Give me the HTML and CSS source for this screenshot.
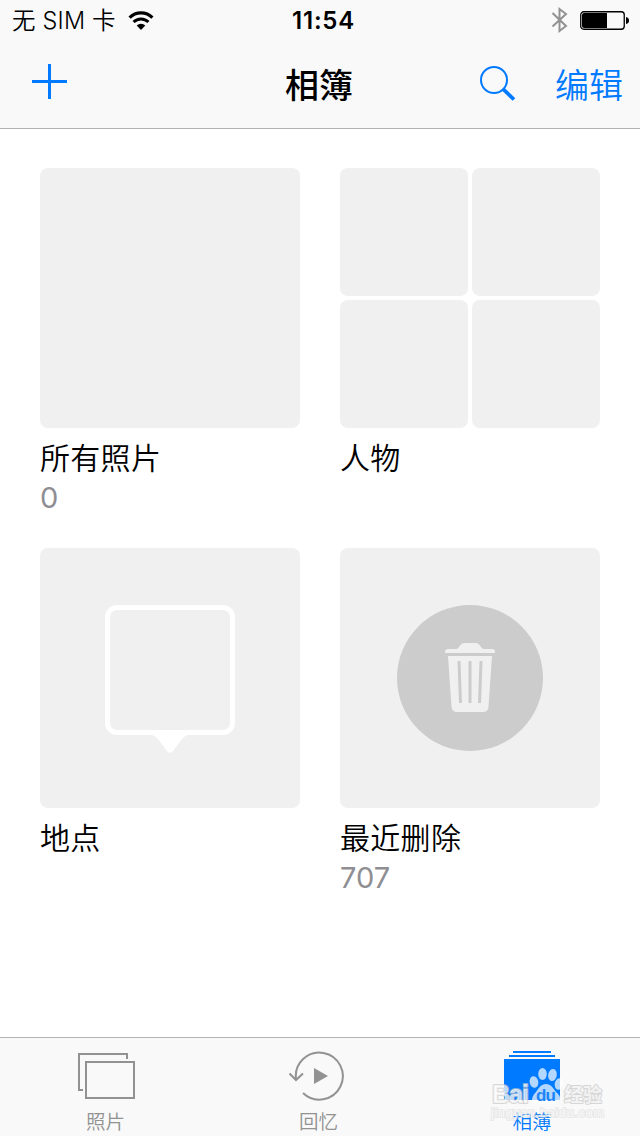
FILE: index.html
```
<!DOCTYPE html>
<html lang="zh-CN">
<head>
    <meta charset="UTF-8">
    <meta name="viewport" content="width=device-width, initial-scale=1.0">
    <title>相簿</title>
    <link rel="stylesheet" href="styles.css">
</head>
<body>
    <header class="top-section">
        <div class="status-bar">
            <div class="status-left">
                <span class="carrier">无 SIM 卡</span>
                <svg class="wifi" width="26" height="20" viewBox="0 0 26 20">
                    <path d="M1.6 6.6 A16 16 0 0 1 24.4 6.6" fill="none" stroke="#000" stroke-width="3.2"/>
                    <path d="M5.6 11 A10.4 10.4 0 0 1 20.4 11" fill="none" stroke="#000" stroke-width="3"/>
                    <path d="M8.7 14.6 A6 6 0 0 1 17.3 14.6 L13 19 Z" fill="#000"/>
                </svg>
            </div>
            <div class="clock">11:54</div>
            <div class="status-right">
                <svg width="18" height="28" viewBox="0 0 18 28">
                    <path d="M1.5 7 L15 20 L8.5 25 V3 L15 8 L1.5 20.500" fill="none" stroke="#929292" stroke-width="2"/>
                </svg>
                <svg class="battery" width="50" height="20" viewBox="0 0 50 20">
                    <rect x="0.75" y="0.75" width="43.5" height="17.500" rx="3" fill="none" stroke="#000" stroke-width="1.300"/>
                    <path d="M4 2 H27 V17 H4 Q2 17 2 15 V4 Q2 2 4 2 Z" fill="#000"/>
                    <path d="M46 6 Q49 6.500 49 9.500 Q49 12.500 46 13 Z" fill="#000"/>
                </svg>
            </div>
        </div>
        <nav class="nav-bar">
            <div class="nav-side">
                <svg class="plus" width="35" height="35" viewBox="0 0 35 35">
                    <path d="M16 0 H19 V16 H35 V19 H19 V35 H16 V19 H0 V16 H16 Z" fill="#007aff"/>
                </svg>
            </div>
            <h1 class="nav-title">相簿</h1>
            <div class="nav-side nav-right">
                <svg class="search" width="36" height="36" viewBox="0 0 36 36">
                    <circle cx="14" cy="14" r="13" fill="none" stroke="#007aff" stroke-width="2"/>
                    <path d="M23 23 L34 33.500" stroke="#007aff" stroke-width="3.800"/>
                </svg>
                <span class="edit">编辑</span>
            </div>
        </nav>
    </header>

    <main class="albums">
        <section class="album">
            <div class="cover"></div>
            <p class="album-name">所有照片</p>
            <p class="album-count">0</p>
        </section>
        <section class="album">
            <div class="cover-faces">
                <div class="face"></div>
                <div class="face"></div>
                <div class="face"></div>
                <div class="face"></div>
            </div>
            <p class="album-name">人物</p>
        </section>
        <section class="album">
            <div class="cover">
                <svg width="260" height="260" viewBox="0 0 260 260">
                    <rect x="67.500" y="59.500" width="125" height="125" rx="9.500" fill="none" stroke="#fff" stroke-width="5"/>
                    <path d="M108 186 C113 187 115 188 118 191 L125.500 201 Q130 208.500 134.500 201 L142 191 C145 188 147 187 152 186 Z" fill="#fff"/>
                </svg>
            </div>
            <p class="album-name">地点</p>
        </section>
        <section class="album">
            <div class="cover">
                <svg width="260" height="260" viewBox="0 0 260 260">
                    <circle cx="130" cy="130" r="73" fill="#ccc"/>
                    <path d="M105 105 V104 Q105 101 108 101 H116 Q118 101 119 99 L120.500 97 Q122 95 124.500 95 H135.500 Q138 95 139.500 97 L141 99 Q142 101 144 101 H152 Q155 101 155 104 V105 Z" fill="#f0f0f0"/>
                    <path d="M108 108 H152 L148.500 159 Q148 164 143 164 H117 Q112 164 111.500 159 Z" fill="#f0f0f0"/>
                    <path d="M119 113 L120.500 155 M130 113 V155 M141 113 L139.500 155" stroke="#ccc" stroke-width="3"/>
                </svg>
            </div>
            <p class="album-name">最近删除</p>
            <p class="album-count">707</p>
        </section>
    </main>

    <footer class="tab-bar">
        <div class="tab">
            <svg width="58" height="50" viewBox="0 0 58 50">
                <path d="M6 39 H2 V3 H50 V8" fill="none" stroke="#929292" stroke-width="2"/>
                <rect x="9" y="11" width="48" height="36" fill="none" stroke="#929292" stroke-width="2"/>
            </svg>
            <span>照片</span>
        </div>
        <div class="tab">
            <svg width="60" height="50" viewBox="0 0 60 50">
                <path d="M7 28 A23.500 23.500 0 1 1 14 42" fill="none" stroke="#929292" stroke-width="2"/>
                <path d="M0.500 22.500 L7 29 L14 22.500" fill="none" stroke="#929292" stroke-width="2"/>
                <path d="M25 17 L39 25 L25 33 Z" fill="#929292"/>
            </svg>
            <span>回忆</span>
        </div>
        <div class="tab tab-active">
            <svg width="56" height="50" viewBox="0 0 56 50">
                <path d="M9 0 H47 V2 H9 Z M5 4 H51 V6 H5 Z M0 8 H56 V49 H0 Z" fill="#007aff"/>
            </svg>
            <span>相簿</span>
        </div>
        <!-- 水印 -->
        <svg class="watermark" width="130" height="80" viewBox="0 0 130 80">
            <g class="mark">
                <ellipse cx="44" cy="26" rx="4.300" ry="5.800" transform="rotate(-12 44 26)"/>
                <ellipse cx="52.500" cy="18" rx="4.300" ry="6"/>
                <ellipse cx="62.500" cy="19" rx="4.300" ry="6" transform="rotate(10 62.500 19)"/>
                <ellipse cx="69" cy="28" rx="4.300" ry="5.800" transform="rotate(12 69 28)"/>
                <path d="M56 28 C61 28 63 32 66 36 Q71 40 70 44 Q68 49 62 48 H50 Q43 49 42 44 Q42 40 46 36 C49 32 51 28 56 28 Z"/>
            </g>
            <g class="mark mark-outline">
                <text x="2" y="46.500" class="mark-logo" textLength="37">Bai</text>
                <text x="74" y="46" class="mark-cn">经验</text>
                <text x="1" y="61" class="mark-url" textLength="113">jingyan.baidu.com</text>
            </g>
            <text x="46" y="45" class="mark-du" textLength="20">du</text>
        </svg>
    </footer>
</body>
</html>
```

FILE: styles.css
```
body {
    margin: 0;
    height: 1136px;
    display: flex;
    flex-direction: column;
    overflow: hidden;
    background-color: #fff;
    color: #000;
    font-family: Inter, "Noto Sans CJK SC", sans-serif;
}

h1, p {
    margin: 0;
}

svg {
    display: block;
    flex: none;
}

/* 顶部 */
.top-section {
    height: 128px;
    flex: none;
    background-color: #f9f9f9;
    border-bottom: 1px solid #b2b2b2;
}

.status-bar {
    height: 40px;
    display: grid;
    grid-template-columns: 1fr auto 1fr;
    align-items: center;
    font-size: 24px;
    line-height: 38px;
}

.status-left, .status-right {
    display: flex;
    align-items: center;
}

.status-left {
    padding-left: 12px;
    gap: 12px;
}

.carrier {
    padding-top: 2px;
    font-size: 23.5px;
    font-weight: 350;
    letter-spacing: 0.2px;
}

.clock {
    font-weight: 600;
    letter-spacing: 0.8px;
    padding-left: 7px;
    padding-top: 2px;
}

.wifi {
    margin-top: 1px;
}

.status-right {
    justify-content: flex-end;
    gap: 11px;
    padding-right: 10px;
}

.battery {
    margin-top: 1px;
}

/* 导航栏 */
.nav-bar {
    height: 88px;
    display: grid;
    grid-template-columns: 1fr auto 1fr;
    align-items: center;
    font-size: 34px;
    line-height: 85px;
}

.nav-side {
    display: flex;
    align-items: center;
    padding: 0 17px 0 32px;
}

.plus {
    margin-bottom: 5px;
}

.search {
    margin-bottom: 1px;
}

.nav-title {
    padding-top: 3px;
    padding-right: 2px;
    font-size: 34px;
    font-weight: 500;
}

.nav-right {
    justify-content: flex-end;
    gap: 39px;
    color: #007aff;
}

.edit {
    padding-top: 3px;
    font-weight: 350;
}

/* 相簿列表 */
.albums {
    flex: 1;
    display: grid;
    grid-template-columns: 260px 260px;
    grid-template-rows: 340px 340px;
    gap: 40px;
    padding: 39px 40px 0;
}

.cover {
    height: 260px;
    background-color: #f0f0f0;
    border-radius: 8px;
}

.cover-faces {
    height: 260px;
    display: grid;
    grid-template-columns: 1fr 1fr;
    grid-template-rows: 1fr 1fr;
    gap: 4px;
}

.face {
    background-color: #f0f0f0;
    border-radius: 8px;
}

.album-name {
    margin-top: 10px;
    font-size: 30px;
    line-height: 40px;
    letter-spacing: 0.3px;
    font-weight: 350;
}

.album-count {
    font-size: 29px;
    line-height: 40px;
    font-weight: 400;
    color: #8e8e93;
}

/* 底部标签栏 */
.tab-bar {
    position: relative;
    height: 98px;
    flex: none;
    display: grid;
    grid-template-columns: 213px 213px 214px;
    background-color: #f9f9f9;
    border-top: 1px solid #b2b2b2;
}

.tab {
    display: flex;
    flex-direction: column;
    align-items: center;
    padding-top: 13px;
    padding-right: 2px;
    font-size: 19.5px;
    line-height: 24px;
    font-weight: 350;
    color: #929292;
}

.tab span {
    margin-top: 9px;
}

.tab-active {
    color: #007aff;
}

.watermark {
    position: absolute;
    left: 490px;
    top: 18px;
}

.mark {
    fill: rgba(255, 255, 255, 0.7);
}

.mark-outline {
    stroke: rgba(200, 200, 200, 0.7);
    stroke-width: 2px;
    stroke-linejoin: round;
    paint-order: stroke;
}

.mark-logo {
    font: bold 25px "Liberation Sans", sans-serif;
}

.mark-cn {
    font: bold 19px "Noto Sans CJK SC", sans-serif;
}

.mark-url {
    font: 13px "Liberation Sans", sans-serif;
    stroke: rgba(215, 215, 215, 0.5);
}

.mark-du {
    font: bold 17px "Liberation Sans", sans-serif;
    fill: #1c84f8;
}
```
